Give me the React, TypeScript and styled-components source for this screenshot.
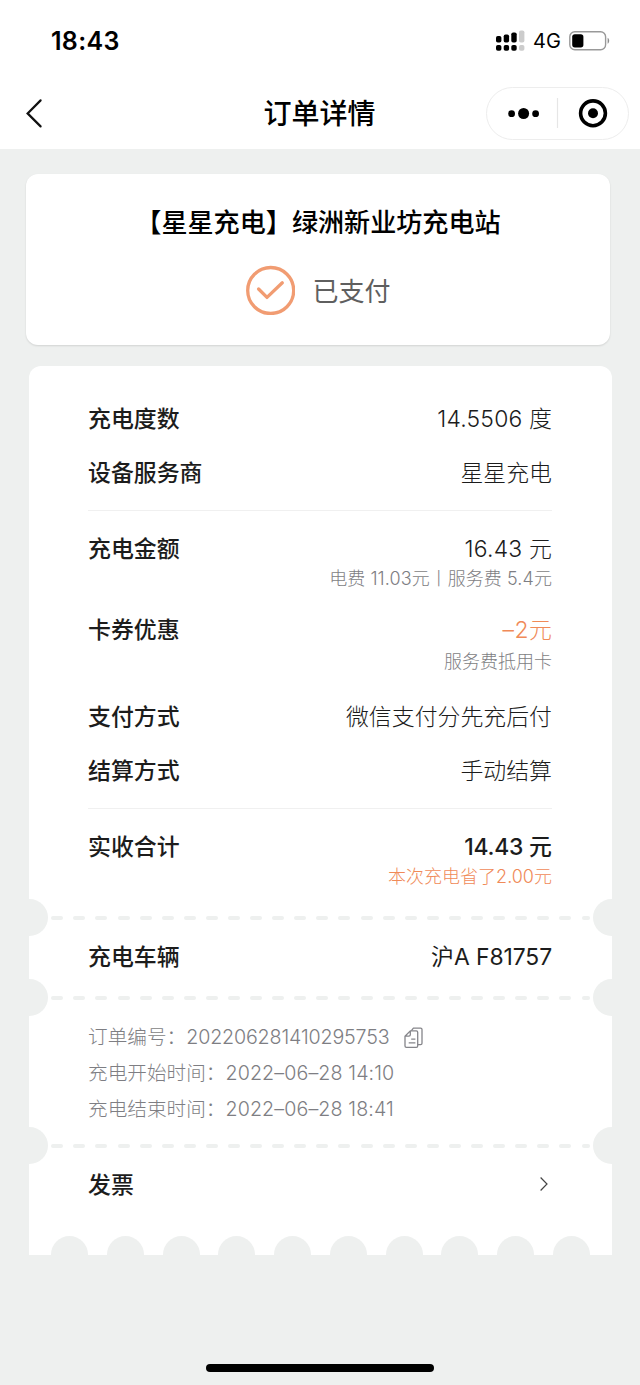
import React from 'react';
import styled, { createGlobalStyle } from 'styled-components';

const GREY = '#eef0ef';
const ORANGE = '#f08a58';
const MUTED = '#7e7e83';

const GlobalStyle = createGlobalStyle`
  * { box-sizing: border-box; }
  body { margin: 0; background: ${GREY}; }
`;

const Page = styled.div`
  width: 640px;
  height: 1385px;
  display: flex;
  flex-direction: column;
  background: ${GREY};
  color: #1c1c1c;
  font-family: Inter, 'Noto Sans CJK SC', sans-serif;
  overflow: hidden;
`;

const Header = styled.header`
  height: 149px;
  flex: none;
  background: #fff;
  color: #000;
`;

const StatusBar = styled.div`
  height: 87px;
  padding: 21px 30px 0 51px;
  display: flex;
  justify-content: space-between;
  line-height: 40px;
`;

const Clock = styled.span`
  font-size: 25px;
  font-weight: 600;
  letter-spacing: 0.3px;
`;

const StatusIcons = styled.div`
  display: flex;
  align-items: center;
  height: 40px;
`;

const Network = styled.span`
  font-size: 20px;
  line-height: 42px;
  font-weight: 400;
  width: 27px;
  margin: 0 9px 0 8px;
  letter-spacing: 0;
  white-space: nowrap;
`;

const NavBar = styled.div`
  height: 53px;
  padding: 0 11px 0 24px;
  display: grid;
  grid-template-columns: 143px 1fr 143px;
  grid-template-rows: 53px;
  align-items: center;
`;

const BackIcon = styled.svg`
  margin-bottom: 1px;
`;

const NavTitle = styled.h1`
  margin: 0;
  padding-right: 14px;
  text-align: center;
  font-size: 28px;
  height: 53px;
  line-height: 55px;
  font-weight: 500;
`;

const Capsule = styled.div`
  height: 53px;
  border: 1px solid #ededed;
  border-radius: 27px;
`;

const StationCard = styled.section`
  width: 584px;
  height: 171px;
  margin: 25px 0 0 26px;
  padding-top: 31px;
  flex: none;
  border-radius: 12px;
  background: #fff;
  box-shadow: 0 1px 2px rgba(0, 0, 0, 0.12);
  display: flex;
  flex-direction: column;
  align-items: center;
`;

const StationName = styled.h2`
  margin: 0;
  font-size: 26.1px;
  line-height: 36px;
  font-weight: 500;
  color: #000;
  white-space: nowrap;
`;

const PayState = styled.div`
  margin-top: 24px;
  display: flex;
  align-items: center;
  gap: 17px;
  font-size: 26px;
  line-height: 50px;
  color: #5f5f5f;
`;

const PayText = styled.span`
  height: 50px;
  line-height: 54px;
`;

const Ticket = styled.section`
  width: 583px;
  height: 889px;
  margin: 21px 0 0 29px;
  padding-top: 37px;
  flex: none;
  border-radius: 12px 12px 0 0;
  background: #fff;
`;

const Row = styled.div<{ $top?: number }>`
  margin-top: ${(p) => p.$top ?? 0}px;
  padding: 0 60px 0 59px;
  display: flex;
  justify-content: space-between;
  align-items: center;
  height: 32px;
  font-size: 22.9px;
  line-height: 32px;
  white-space: nowrap;
`;

const Label = styled.span`
  font-weight: 500;
`;

const Value = styled.span<{ $weight?: number; $color?: string }>`
  font-weight: ${(p) => p.$weight ?? 300};
  color: ${(p) => p.$color ?? 'inherit'};
`;

const Note = styled.div<{ $color?: string; $top?: number }>`
  margin-top: ${(p) => p.$top ?? 0}px;
  padding-right: 60px;
  height: 28px;
  font-size: 18px;
  line-height: 28px;
  font-weight: 300;
  text-align: right;
  color: ${(p) => p.$color ?? MUTED};
  white-space: nowrap;
`;

const Latin = styled.span<{ $track?: number }>`
  letter-spacing: ${(p) => p.$track ?? 0}px;
`;

const Divider = styled.hr<{ $top: number }>`
  height: 1px;
  margin: ${(p) => p.$top}px 60px 0 59px;
  border: 0;
  background: #f0f0f0;
`;

const Tear = styled.div<{ $top: number }>`
  margin-top: ${(p) => p.$top}px;
  height: 37px;
  display: flex;
  justify-content: space-between;
  align-items: center;
`;

const Notch = styled.span<{ $side: 'left' | 'right' }>`
  width: 19px;
  height: 37px;
  background: ${GREY};
  border-radius: ${(p) => (p.$side === 'left' ? '0 19px 19px 0' : '19px 0 0 19px')};
`;

const Dashes = styled.div`
  width: 538.5px;
  display: flex;
  gap: 10.1px;
`;

const Dash = styled.span<{ $short: boolean }>`
  flex: none;
  width: ${(p) => (p.$short ? 8.5 : 12)}px;
  height: 4px;
  border-radius: 2px;
  background: ${GREY};
`;

const OrderInfo = styled.div`
  margin-top: 3px;
  padding-left: 59px;
  height: 108px;
  font-size: 19.65px;
  font-weight: 300;
  color: ${MUTED};
`;

const OrderLine = styled.div`
  height: 36px;
  line-height: 36px;
  display: flex;
  align-items: center;
  white-space: nowrap;
`;

const CopyIcon = styled.svg`
  margin: 1px 0 0 14px;
`;

const Chevron = styled.svg`
  margin-bottom: 3px;
`;

const Scallops = styled.div`
  margin-top: 35px;
  padding: 0 22px;
  height: 19px;
  display: flex;
  justify-content: space-between;
`;

const Scallop = styled.span`
  width: 37px;
  height: 19px;
  border-radius: 19px 19px 0 0;
  background: ${GREY};
`;

const HomeIndicator = styled.div`
  width: 228px;
  height: 8px;
  margin: auto auto 13px;
  border-radius: 4px;
  background: #000;
`;

const SIGNAL = [
  { x: 0, top: 6, on: true },
  { x: 7.7, top: 4.5, on: true },
  { x: 15.3, top: 2.4, on: true },
  { x: 23, top: 0.4, on: false },
];

function Perforation({ top }: { top: number }) {
  return (
    <Tear $top={top}>
      <Notch $side="left" />
      <Dashes>
        {Array.from({ length: 25 }, (_, i) => (
          <Dash key={i} $short={i === 24} />
        ))}
      </Dashes>
      <Notch $side="right" />
    </Tear>
  );
}

export default function App() {
  return (
    <Page>
      <GlobalStyle />
      <Header>
        <StatusBar>
          <Clock>18:43</Clock>
          <StatusIcons>
            <svg width="29" height="22" viewBox="0 0 29 22">
              {SIGNAL.map((s) => (
                <g key={s.x} fill={s.on ? '#000' : '#ccc'}>
                  <rect x={s.x} y={s.top} width="5.4" height={12.5 - s.top} rx="1.8" />
                  <rect x={s.x} y="15" width="5.4" height="5.7" rx="1.8" />
                </g>
              ))}
            </svg>
            <Network>4G</Network>
            <svg width="41" height="20" viewBox="0 0 41 20">
              <rect x="0.8" y="0.8" width="35.8" height="18" rx="5" fill="none" stroke="#999" strokeWidth="1.4" />
              <rect x="3.2" y="3.2" width="11.2" height="13.2" rx="2.6" />
              <path d="M38.6 6.8c2.1 1 2.1 5 0 6z" fill="#8c8c8c" />
            </svg>
          </StatusIcons>
        </StatusBar>
        <NavBar>
          <BackIcon width="24" height="32" viewBox="0 0 24 32">
            <path d="M16.6 3.4 3.6 16.4l13 13" fill="none" stroke="#111" strokeWidth="2.2" strokeLinecap="round" />
          </BackIcon>
          <NavTitle>订单详情</NavTitle>
          <Capsule>
            <svg width="141" height="51" viewBox="0 0 141 51">
              <circle cx="24.6" cy="25.7" r="3.4" />
              <circle cx="36.6" cy="25.5" r="5.5" />
              <circle cx="48.6" cy="25.7" r="3.4" />
              <path d="M70.5 10v30" stroke="#e6e6e6" strokeWidth="1.2" />
              <circle cx="106" cy="25.3" r="12.4" fill="none" stroke="#000" strokeWidth="3.6" />
              <circle cx="106" cy="25.3" r="5" />
            </svg>
          </Capsule>
        </NavBar>
      </Header>

      <StationCard>
        <StationName>【星星充电】绿洲新业坊充电站</StationName>
        <PayState>
          <svg width="50" height="50" viewBox="0 0 50 50" fill="none" stroke="#f19c72" strokeWidth="3.3">
            <circle cx="25.7" cy="25.5" r="23" />
            <path d="m13.6 24 8.4 8.4L37.3 17.8" strokeLinecap="round" strokeLinejoin="round" />
          </svg>
          <PayText>已支付</PayText>
        </PayState>
      </StationCard>

      <Ticket>
        <Row>
          <Label>充电度数</Label>
          <Value><Latin $track={0.2}>14.5506 </Latin>度</Value>
        </Row>
        <Row $top={22}>
          <Label>设备服务商</Label>
          <Value>星星充电</Value>
        </Row>
        <Divider $top={21} />
        <Row $top={22}>
          <Label>充电金额</Label>
          <Value><Latin $track={0.25}>16.43 </Latin>元</Value>
        </Row>
        <Note>电费<Latin $track={0.1}> 11.03</Latin>元丨服务费<Latin $track={0.15}> 5.4</Latin>元</Note>
        <Row $top={21}>
          <Label>卡券优惠</Label>
          <Value $color={ORANGE}><Latin $track={0.5}>–2</Latin>元</Value>
        </Row>
        <Note $top={2}>服务费抵用卡</Note>
        <Row $top={25}>
          <Label>支付方式</Label>
          <Value>微信支付分先充后付</Value>
        </Row>
        <Row $top={22}>
          <Label>结算方式</Label>
          <Value>手动结算</Value>
        </Row>
        <Divider $top={21} />
        <Row $top={22}>
          <Label>实收合计</Label>
          <Value $weight={500}><Latin $track={-0.2}>14.43 </Latin>元</Value>
        </Row>
        <Note $color={ORANGE}>本次充电省了<Latin>2.00</Latin>元</Note>

        <Perforation top={8} />
        <Row $top={5}>
          <Label>充电车辆</Label>
          <Value $weight={400}>沪<Latin $track={-0.1}>A F81757</Latin></Value>
        </Row>
        <Perforation top={6} />

        <OrderInfo>
          <OrderLine>
            订单编号：<Latin $track={-0.14}>202206281410295753</Latin>
            <CopyIcon width="20" height="22" viewBox="0 0 20 22" fill="none" stroke="#85858a" strokeWidth="1.3" strokeLinejoin="round">
              <path d="M6.3 3.9h6q1.4 0 1.4 1.4v13.6q0 1.4-1.4 1.4H2.4Q1 20.3 1 18.9V9.2zM6.3 3.9v3.9q0 1.4-1.4 1.4H1" />
              <path d="M7.4 3.6 9.4 1.1h7.2q1.4 0 1.4 1.4v13.7q0 1.4-1.4 1.4h-2.7M7.2 12.2h4.2M4.7 15.9h6.7" />
            </CopyIcon>
          </OrderLine>
          <OrderLine>充电开始时间：<Latin $track={0.12}>2022–06–28 14:10</Latin></OrderLine>
          <OrderLine>充电结束时间：<Latin $track={0.12}>2022–06–28 18:41</Latin></OrderLine>
        </OrderInfo>

        <Perforation top={0} />
        <Row $top={5}>
          <Label>发票</Label>
          <Chevron width="16" height="16" viewBox="0 0 16 16">
            <path d="m4.6 1.5 6.4 6.5-6.4 6.5" fill="none" stroke="#444" strokeWidth="1.2" />
          </Chevron>
        </Row>
        <Scallops>
          {Array.from({ length: 10 }, (_, i) => (
            <Scallop key={i} />
          ))}
        </Scallops>
      </Ticket>
      <HomeIndicator />
    </Page>
  );
}
